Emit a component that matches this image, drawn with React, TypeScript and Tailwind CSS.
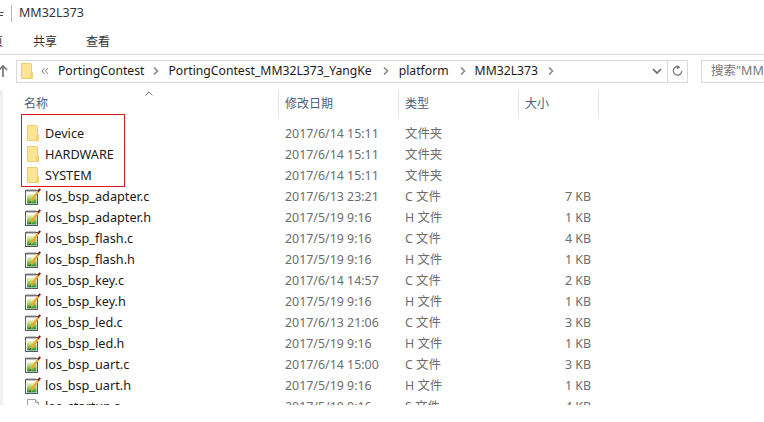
import React from 'react';

const rows = [
  { name: 'Device', date: '2017/6/14 15:11', type: '文件夹', size: '', icon: 'folder' },
  { name: 'HARDWARE', date: '2017/6/14 15:11', type: '文件夹', size: '', icon: 'folder' },
  { name: 'SYSTEM', date: '2017/6/14 15:11', type: '文件夹', size: '', icon: 'folder' },
  { name: 'los_bsp_adapter.c', date: '2017/6/13 23:21', type: 'C 文件', size: '7 KB', icon: 'source' },
  { name: 'los_bsp_adapter.h', date: '2017/5/19 9:16', type: 'H 文件', size: '1 KB', icon: 'source' },
  { name: 'los_bsp_flash.c', date: '2017/5/19 9:16', type: 'C 文件', size: '4 KB', icon: 'source' },
  { name: 'los_bsp_flash.h', date: '2017/5/19 9:16', type: 'H 文件', size: '1 KB', icon: 'source' },
  { name: 'los_bsp_key.c', date: '2017/6/14 14:57', type: 'C 文件', size: '2 KB', icon: 'source' },
  { name: 'los_bsp_key.h', date: '2017/5/19 9:16', type: 'H 文件', size: '1 KB', icon: 'source' },
  { name: 'los_bsp_led.c', date: '2017/6/13 21:06', type: 'C 文件', size: '3 KB', icon: 'source' },
  { name: 'los_bsp_led.h', date: '2017/5/19 9:16', type: 'H 文件', size: '1 KB', icon: 'source' },
  { name: 'los_bsp_uart.c', date: '2017/6/14 15:00', type: 'C 文件', size: '3 KB', icon: 'source' },
  { name: 'los_bsp_uart.h', date: '2017/5/19 9:16', type: 'H 文件', size: '1 KB', icon: 'source' },
  { name: 'los_startup.s', date: '2017/5/19 9:16', type: 'S 文件', size: '4 KB', icon: 'blank' },
];

const FolderIcon = () => (
  <svg width="16" height="16" viewBox="0 0 16 16" className="shrink-0">
    <path d="M2.500 0.500h9.500l0.500 1v8h1v6h-11z" fill="#fde594" stroke="#ecce6e" />
    <path d="M12.500 9.500h1v6h-2.500v-4z" fill="#f0d27a" />
  </svg>
);

const SourceIcon = () => (
  <svg width="16" height="17" viewBox="0 0 16 17" className="shrink-0">
    <defs>
      <linearGradient id="srcfill" x1="0" y1="0" x2="0" y2="1">
        <stop offset="0" stopColor="#f2f5c8" />
        <stop offset="0.45" stopColor="#a9d45a" />
        <stop offset="1" stopColor="#1f8f36" />
      </linearGradient>
    </defs>
    <rect x="0.500" y="2.500" width="12" height="14" fill="#fbfbfb" stroke="#5a5a5a" />
    <path d="M2 1v3M4 1v3M6 1v3M8 1v3M10 1v3" stroke="#8a8a8a" strokeWidth="1" />
    <rect x="2" y="6" width="9.500" height="9.500" fill="url(#srcfill)" />
    <path d="M5.500 14 L13.500 3" stroke="#eda92e" strokeWidth="2.200" />
    <path d="M13 3.500 L15.200 0.800" stroke="#8c1c2c" strokeWidth="2" />
    <path d="M4.500 15 L5.800 13.200" stroke="#3a3a3a" strokeWidth="1" />
  </svg>
);

const BlankIcon = () => (
  <svg width="16" height="16" viewBox="0 0 16 16" className="shrink-0">
    <path d="M2.500 1.500h8l3 3v11h-11z" fill="#fff" stroke="#a0a0a0" />
    <path d="M10.500 1.500v3h3" fill="#eee" stroke="#a0a0a0" />
  </svg>
);

const Chevron = () => (
  <svg width="6" height="8" viewBox="0 0 6 8" className="shrink-0">
    <path d="M1 0.500 L4.500 4 L1 7.500" fill="none" stroke="#8a8a8a" strokeWidth="1.600" />
  </svg>
);

export default function App() {
  return (
    <div className="w-[764px] h-[422px] overflow-hidden bg-white text-[12px] text-[#1a1a1a] font-['Noto_Sans','Noto_Sans_CJK_SC',sans-serif]">
      {/* Title */}
      <div className="h-[26px] flex items-center">
        <svg width="4" height="8" viewBox="0 0 4 8" className="mt-[2px]">
          <path d="M0 2.500h3.500M0 5.500h3" stroke="#444" strokeWidth="1" />
        </svg>
        <div className="ml-[7px] w-px h-[17px] bg-[#b8b8b8]" />
        <span className="ml-[7px] text-[12.500px] text-[#333]">MM32L373</span>
      </div>

      {/* Ribbon tabs */}
      <div className="h-[29px] pt-[3px] flex items-center border-b border-[#dadada] text-[#333]">
        <span className="w-[3px] overflow-hidden whitespace-nowrap flex justify-end">页</span>
        <span className="ml-[30px]">共享</span>
        <span className="ml-[29px]">查看</span>
      </div>

      {/* Address bar */}
      <div className="h-[32px] flex items-center text-[12.200px]">
        <svg width="10" height="14" viewBox="0 0 10 14" className="-ml-[2px]">
          <path d="M5 13V2M1 6l4-4 4 4" fill="none" stroke="#777" strokeWidth="1.700" />
        </svg>
        <div className="ml-[8px] w-[672px] h-[23px] flex items-center border border-[#d9d9d9]">
          <span className="ml-[2px] flex"><FolderIcon /></span>
          <svg width="8" height="8" viewBox="0 0 8 8" className="ml-[6px] shrink-0">
            <path d="M3.500 1L1 4l2.500 3M7 1L4.500 4 7 7" fill="none" stroke="#8a8a8a" strokeWidth="1" />
          </svg>
          <span className="ml-[9px]">PortingContest</span>
          <span className="ml-[9px] flex"><Chevron /></span>
          <span className="ml-[9px]">PortingContest_MM32L373_YangKe</span>
          <span className="ml-[11px] flex"><Chevron /></span>
          <span className="ml-[10px]">platform</span>
          <span className="ml-[11px] flex"><Chevron /></span>
          <span className="ml-[9px]">MM32L373</span>
          <span className="ml-[10px] flex"><Chevron /></span>
          <div className="ml-auto w-[20px] h-full flex items-center justify-center">
            <svg width="10" height="7" viewBox="0 0 10 7">
              <path d="M1 1l4 4 4-4" fill="none" stroke="#666" strokeWidth="1.600" />
            </svg>
          </div>
          <div className="w-[20px] h-full flex items-center justify-center border-l border-[#d9d9d9]">
            <svg width="11" height="12" viewBox="0 0 11 12">
              <path d="M7.500 2.200A4.200 4.200 0 1 0 9.700 6" fill="none" stroke="#777" strokeWidth="1.300" />
              <path d="M4.500 0l3.800 2.200-3 2z" fill="#777" />
            </svg>
          </div>
        </div>
        <div className="ml-[13px] flex-1 h-[23px] flex items-center border border-[#d9d9d9] border-r-0 pl-[9px] text-[12.500px] text-[#777] overflow-hidden whitespace-nowrap">
          搜索"MM32L373"
        </div>
      </div>

      {/* File list */}
      <div className="relative mt-[3px] h-[315px] flex overflow-hidden">
        <div className="w-[3px] shrink-0 h-full bg-[#f0f0f0]" />
        <div className="flex-1 min-w-0">
          <div className="relative h-[27px] flex text-[#4c607a]">
            <div className="w-[276px] pl-[21px] pt-[5px] border-r border-[#e5e5e5]">名称</div>
            <div className="w-[120px] pl-[6px] pt-[5px] border-r border-[#e5e5e5]">修改日期</div>
            <div className="w-[120px] pl-[6px] pt-[5px] border-r border-[#e5e5e5]">类型</div>
            <div className="w-[80px] pl-[6px] pt-[5px] border-r border-[#e5e5e5]">大小</div>
            <svg width="8" height="5" viewBox="0 0 8 5" className="absolute left-[142px] top-[1px]">
              <path d="M0.500 4.500L4 1l3.500 3.500" fill="none" stroke="#777" strokeWidth="1" />
            </svg>
          </div>
          <div className="pt-[6px]">
            {rows.map((row) => (
              <div key={row.name} className="h-[21px] flex items-center">
                <div className="w-[276px] pl-[22px] flex items-center">
                  {row.icon === 'folder' && <FolderIcon />}
                  {row.icon === 'source' && <SourceIcon />}
                  {row.icon === 'blank' && <BlankIcon />}
                  <span className="ml-[4px] text-[12.700px] text-[#1a1a1a]">{row.name}</span>
                </div>
                <div className="w-[120px] pl-[6px] pt-[2px] text-[12.400px] text-[#6d6d6d]">{row.date}</div>
                <div className="w-[120px] pl-[6px] pt-[2px] text-[12.400px] text-[#6d6d6d]">{row.type}</div>
                <div className="w-[72px] pt-[2px] text-right text-[12.400px] text-[#6d6d6d]">{row.size}</div>
              </div>
            ))}
          </div>
        </div>
        {/* Annotation box drawn over the list */}
        <div className="absolute left-[21px] top-[24px] w-[104px] h-[73px] border border-[#e5141c]" />
      </div>
    </div>
  );
}
